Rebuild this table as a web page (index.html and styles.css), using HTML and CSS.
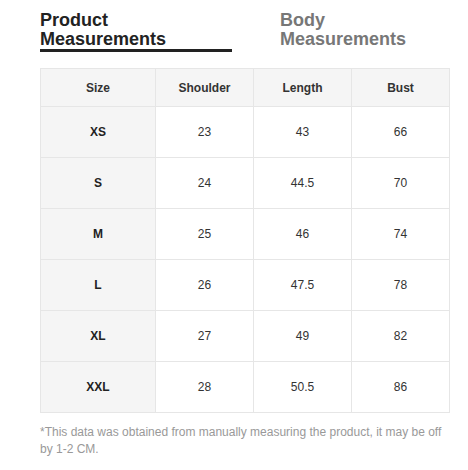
FILE: index.html
```html
<!DOCTYPE html>
<html>
<head>
<meta charset="utf-8">
<link rel="stylesheet" href="styles.css">
</head>
<body>
<div class="page">
  <div class="tabs">
    <div class="tab active">Product<br>Measurements</div>
    <div class="tab">Body<br>Measurements</div>
  </div>
  <table class="sizes">
    <colgroup>
      <col class="c-size"><col class="c-val"><col class="c-val"><col class="c-val">
    </colgroup>
    <thead>
      <tr><th>Size</th><th>Shoulder</th><th>Length</th><th>Bust</th></tr>
    </thead>
    <tbody>
      <tr><td class="sz">XS</td><td>23</td><td>43</td><td>66</td></tr>
      <tr><td class="sz">S</td><td>24</td><td>44.5</td><td>70</td></tr>
      <tr><td class="sz">M</td><td>25</td><td>46</td><td>74</td></tr>
      <tr><td class="sz">L</td><td>26</td><td>47.5</td><td>78</td></tr>
      <tr><td class="sz">XL</td><td>27</td><td>49</td><td>82</td></tr>
      <tr><td class="sz">XXL</td><td>28</td><td>50.5</td><td>86</td></tr>
    </tbody>
  </table>
  <p class="note">*This data was obtained from manually measuring the product, it may be off by 1-2 CM.</p>
</div>
</body>
</html>
```
FILE: styles.css
```css
html, body {
  margin: 0;
  padding: 0;
  background: #fff;
}
.page {
  padding: 11px 0 0 40px;
  width: 410px;
  font-family: "Liberation Sans", Arial, sans-serif;
}
.tabs {
  display: flex;
  gap: 48px;
}
.tab {
  font-size: 18px;
  line-height: 19px;
  font-weight: bold;
  color: #777;
  border-bottom: 3px solid transparent;
}
.tab.active {
  color: #222;
  width: 192px;
  border-bottom-color: #222;
}
.sizes {
  margin-top: 16px;
  border-collapse: collapse;
  width: 410px;
  table-layout: fixed;
  font-size: 12px;
  color: #333;
}
.c-size { width: 115px; }
.c-val { width: 98px; }
.sizes th, .sizes td {
  border: 1px solid #e6e6e6;
  text-align: center;
  padding: 0;
}
.sizes th {
  height: 37px;
  background: #f5f5f5;
  font-weight: bold;
}
.sizes td {
  height: 50px;
}
.sizes td.sz {
  background: #f5f5f5;
  font-weight: bold;
  color: #222;
}
.note {
  margin: 11px 0 0;
  font-size: 12px;
  line-height: 17px;
  color: #999;
}
```
